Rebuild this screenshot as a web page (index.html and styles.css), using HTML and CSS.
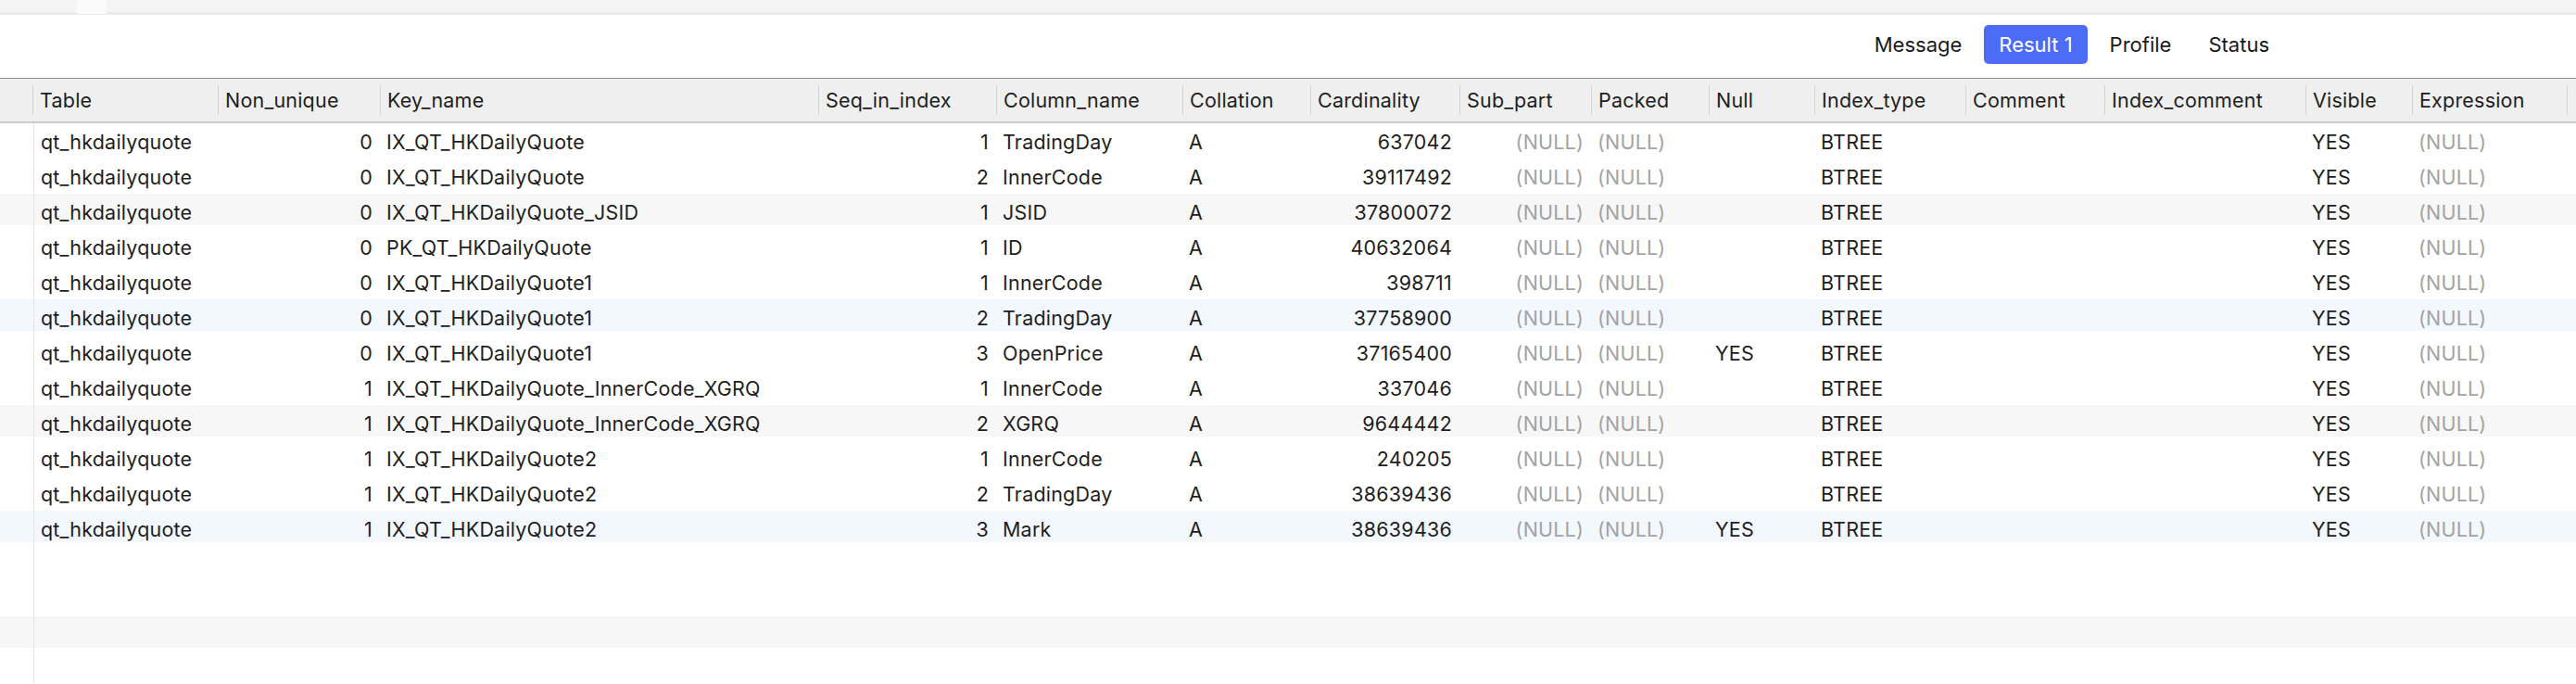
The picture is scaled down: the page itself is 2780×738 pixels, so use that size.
FILE: index.html
```html
<!DOCTYPE html>
<html>
<head>
<meta charset="utf-8">
<link rel="stylesheet" href="styles.css">
</head>
<body>
<div class="topstrip"><div class="stub"></div></div>
<div class="toolbar">
  <div class="tabs">
    <span class="tab">Message</span>
    <span class="tab active">Result 1</span>
    <span class="tab">Profile</span>
    <span class="tab">Status</span>
  </div>
</div>
<div class="grid">
  <div class="head">
    <div class="hc gut"></div>
    <div class="hc">Table</div>
    <div class="hc">Non_unique</div>
    <div class="hc">Key_name</div>
    <div class="hc">Seq_in_index</div>
    <div class="hc">Column_name</div>
    <div class="hc">Collation</div>
    <div class="hc">Cardinality</div>
    <div class="hc">Sub_part</div>
    <div class="hc">Packed</div>
    <div class="hc">Null</div>
    <div class="hc">Index_type</div>
    <div class="hc">Comment</div>
    <div class="hc">Index_comment</div>
    <div class="hc">Visible</div>
    <div class="hc">Expression</div>
    <div class="hc"></div>
  </div>
  <div class="body">
    <div class="row"><div class="c gut"></div><div class="c">qt_hkdailyquote</div><div class="c r">0</div><div class="c">IX_QT_HKDailyQuote</div><div class="c r">1</div><div class="c">TradingDay</div><div class="c">A</div><div class="c r">637042</div><div class="c r n">(NULL)</div><div class="c n">(NULL)</div><div class="c"></div><div class="c">BTREE</div><div class="c"></div><div class="c"></div><div class="c">YES</div><div class="c n">(NULL)</div><div class="c"></div></div>
    <div class="row"><div class="c gut"></div><div class="c">qt_hkdailyquote</div><div class="c r">0</div><div class="c">IX_QT_HKDailyQuote</div><div class="c r">2</div><div class="c">InnerCode</div><div class="c">A</div><div class="c r">39117492</div><div class="c r n">(NULL)</div><div class="c n">(NULL)</div><div class="c"></div><div class="c">BTREE</div><div class="c"></div><div class="c"></div><div class="c">YES</div><div class="c n">(NULL)</div><div class="c"></div></div>
    <div class="row gray"><div class="c gut"></div><div class="c">qt_hkdailyquote</div><div class="c r">0</div><div class="c">IX_QT_HKDailyQuote_JSID</div><div class="c r">1</div><div class="c">JSID</div><div class="c">A</div><div class="c r">37800072</div><div class="c r n">(NULL)</div><div class="c n">(NULL)</div><div class="c"></div><div class="c">BTREE</div><div class="c"></div><div class="c"></div><div class="c">YES</div><div class="c n">(NULL)</div><div class="c"></div></div>
    <div class="row"><div class="c gut"></div><div class="c">qt_hkdailyquote</div><div class="c r">0</div><div class="c">PK_QT_HKDailyQuote</div><div class="c r">1</div><div class="c">ID</div><div class="c">A</div><div class="c r">40632064</div><div class="c r n">(NULL)</div><div class="c n">(NULL)</div><div class="c"></div><div class="c">BTREE</div><div class="c"></div><div class="c"></div><div class="c">YES</div><div class="c n">(NULL)</div><div class="c"></div></div>
    <div class="row"><div class="c gut"></div><div class="c">qt_hkdailyquote</div><div class="c r">0</div><div class="c">IX_QT_HKDailyQuote1</div><div class="c r">1</div><div class="c">InnerCode</div><div class="c">A</div><div class="c r">398711</div><div class="c r n">(NULL)</div><div class="c n">(NULL)</div><div class="c"></div><div class="c">BTREE</div><div class="c"></div><div class="c"></div><div class="c">YES</div><div class="c n">(NULL)</div><div class="c"></div></div>
    <div class="row blue"><div class="c gut"></div><div class="c">qt_hkdailyquote</div><div class="c r">0</div><div class="c">IX_QT_HKDailyQuote1</div><div class="c r">2</div><div class="c">TradingDay</div><div class="c">A</div><div class="c r">37758900</div><div class="c r n">(NULL)</div><div class="c n">(NULL)</div><div class="c"></div><div class="c">BTREE</div><div class="c"></div><div class="c"></div><div class="c">YES</div><div class="c n">(NULL)</div><div class="c"></div></div>
    <div class="row"><div class="c gut"></div><div class="c">qt_hkdailyquote</div><div class="c r">0</div><div class="c">IX_QT_HKDailyQuote1</div><div class="c r">3</div><div class="c">OpenPrice</div><div class="c">A</div><div class="c r">37165400</div><div class="c r n">(NULL)</div><div class="c n">(NULL)</div><div class="c">YES</div><div class="c">BTREE</div><div class="c"></div><div class="c"></div><div class="c">YES</div><div class="c n">(NULL)</div><div class="c"></div></div>
    <div class="row"><div class="c gut"></div><div class="c">qt_hkdailyquote</div><div class="c r">1</div><div class="c">IX_QT_HKDailyQuote_InnerCode_XGRQ</div><div class="c r">1</div><div class="c">InnerCode</div><div class="c">A</div><div class="c r">337046</div><div class="c r n">(NULL)</div><div class="c n">(NULL)</div><div class="c"></div><div class="c">BTREE</div><div class="c"></div><div class="c"></div><div class="c">YES</div><div class="c n">(NULL)</div><div class="c"></div></div>
    <div class="row gray"><div class="c gut"></div><div class="c">qt_hkdailyquote</div><div class="c r">1</div><div class="c">IX_QT_HKDailyQuote_InnerCode_XGRQ</div><div class="c r">2</div><div class="c">XGRQ</div><div class="c">A</div><div class="c r">9644442</div><div class="c r n">(NULL)</div><div class="c n">(NULL)</div><div class="c"></div><div class="c">BTREE</div><div class="c"></div><div class="c"></div><div class="c">YES</div><div class="c n">(NULL)</div><div class="c"></div></div>
    <div class="row"><div class="c gut"></div><div class="c">qt_hkdailyquote</div><div class="c r">1</div><div class="c">IX_QT_HKDailyQuote2</div><div class="c r">1</div><div class="c">InnerCode</div><div class="c">A</div><div class="c r">240205</div><div class="c r n">(NULL)</div><div class="c n">(NULL)</div><div class="c"></div><div class="c">BTREE</div><div class="c"></div><div class="c"></div><div class="c">YES</div><div class="c n">(NULL)</div><div class="c"></div></div>
    <div class="row"><div class="c gut"></div><div class="c">qt_hkdailyquote</div><div class="c r">1</div><div class="c">IX_QT_HKDailyQuote2</div><div class="c r">2</div><div class="c">TradingDay</div><div class="c">A</div><div class="c r">38639436</div><div class="c r n">(NULL)</div><div class="c n">(NULL)</div><div class="c"></div><div class="c">BTREE</div><div class="c"></div><div class="c"></div><div class="c">YES</div><div class="c n">(NULL)</div><div class="c"></div></div>
    <div class="row blue"><div class="c gut"></div><div class="c">qt_hkdailyquote</div><div class="c r">1</div><div class="c">IX_QT_HKDailyQuote2</div><div class="c r">3</div><div class="c">Mark</div><div class="c">A</div><div class="c r">38639436</div><div class="c r n">(NULL)</div><div class="c n">(NULL)</div><div class="c">YES</div><div class="c">BTREE</div><div class="c"></div><div class="c"></div><div class="c">YES</div><div class="c n">(NULL)</div><div class="c"></div></div>
    <div class="row empty"><div class="c gut"></div></div>
    <div class="row empty"><div class="c gut"></div></div>
    <div class="row empty gray"><div class="c gut"></div></div>
    <div class="row empty"><div class="c gut"></div></div>
  </div>
</div>
</body>
</html>
```

FILE: styles.css
```css
html {
  margin: 0;
  padding: 0;
  width: 2780px;
  height: 738px;
  overflow: hidden;
  background: #ffffff;
}
body {
  margin: 0;
  padding: 0;
  width: 2780px;
  height: 738px;
  overflow: hidden;
  font-family: Inter, "Noto Sans", sans-serif;
  color: #1e1e1e;
  background: #ffffff;
}
.topstrip {
  height: 13px;
  background: #f5f5f5;
  border-bottom: 3px solid #ebebeb;
  display: flex;
}
.stub {
  margin-left: 83px;
  width: 32px;
  height: 15px;
  background: #fbfbfb;
}
.toolbar {
  height: 68px;
  display: flex;
  justify-content: flex-end;
  align-items: flex-start;
  padding-right: 315px;
}
.tabs {
  margin-top: 11px;
  display: flex;
  gap: 8px;
}
.tab {
  height: 42px;
  padding: 0 16px;
  display: flex;
  align-items: center;
  font-size: 22px;
  color: #1a1a1a;
  border-radius: 5px;
}
.tab.active {
  background: #4d6cf6;
  color: #ffffff;
}
.grid {
  width: 2780px;
  overflow: hidden;
}
.head {
  display: grid;
  grid-template-columns: 35px 200px 175px 473px 192px 201px 138px 161px 142px 127px 114px 163px 150px 217px 115px 167px 10px;
  height: 46px;
  align-items: center;
  background: #efefef;
  border-top: 1px solid #8e8e8e;
  border-bottom: 2px solid #cdcdcd;
}
.hc {
  height: 32px;
  line-height: 32px;
  border-left: 1px solid #d2d2d2;
  padding-left: 7px;
  font-size: 21.5px;
  letter-spacing: 0.2px;
  white-space: nowrap;
  overflow: hidden;
}
.hc.gut {
  border-left: none;
}
.body {
  display: flex;
  flex-direction: column;
  gap: 4px;
  background: linear-gradient(to right, transparent 36px, #e4e4e4 36px, #e4e4e4 37px, transparent 37px);
}
.row {
  display: grid;
  grid-template-columns: 37px 198px 175px 473px 192px 201px 138px 161px 142px 127px 114px 163px 150px 217px 115px 167px 10px;
  height: 34px;
  align-items: center;
}
.row.gray {
  background: #f7f7f7;
}
.row.blue {
  background: #f3f7fe;
}
.c {
  padding: 5px 7px 0 7px;
  font-size: 21.5px;
  letter-spacing: 0.2px;
  white-space: nowrap;
  overflow: hidden;
}
.c.gut {
  height: 34px;
  padding: 0;
  box-sizing: border-box;
  border-right: 1px solid #e4e4e4;
}
.c.r {
  text-align: right;
  padding-right: 8px;
}
.c.n {
  color: #a3a3a3;
}
```
